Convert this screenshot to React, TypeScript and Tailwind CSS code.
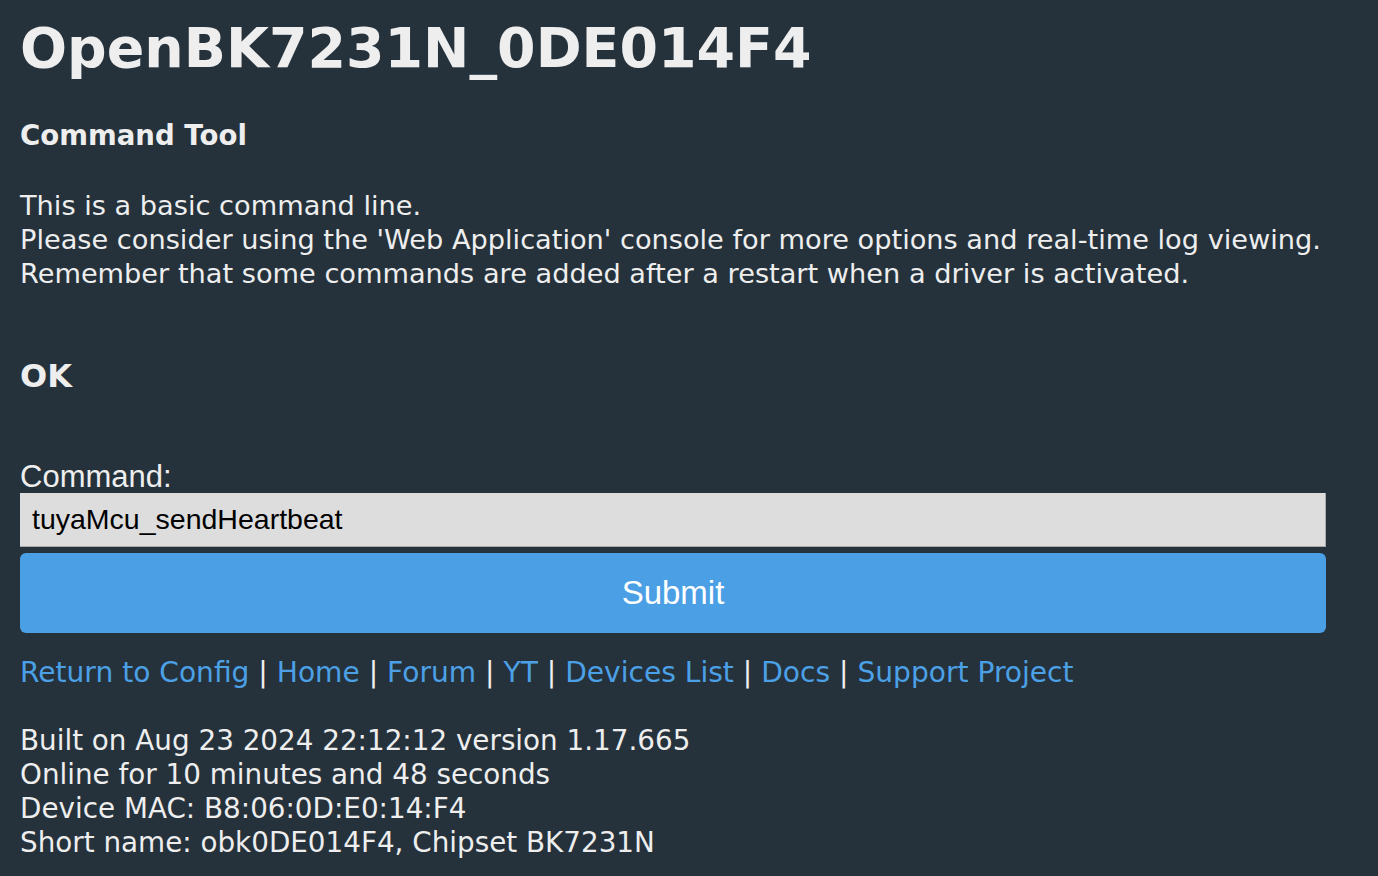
import React from "react";

const body = { fontFamily: '"DejaVu Sans", Verdana, sans-serif' };
const sans = { fontFamily: '"Liberation Sans", Arial, Helvetica, sans-serif' };

export default function App() {
  const links = ["Return to Config", "Home", "Forum", "YT", "Devices List", "Docs", "Support Project"];
  return (
    <div className="min-h-[876px] w-full bg-[#25323c] text-[#eeeeee] px-[20px]" style={body}>
      <div className="w-[1306px]">
        <h1 className="pt-[14px] text-[55.4px] leading-[68px] font-bold">OpenBK7231N_0DE014F4</h1>
        <h3 className="mt-[37px] text-[27.6px] leading-[34px] font-bold">Command Tool</h3>
        <p className="mt-[36px] text-[27.2px] leading-[34px]">
          This is a basic command line.
          <br />
          Please consider using the 'Web Application' console for more options and real-time log viewing.
          <br />
          Remember that some commands are added after a restart when a driver is activated.
        </p>
        <h2 className="mt-[53px] text-[32px] leading-[64px] font-bold">OK</h2>
        <form className="mt-[53px]" onSubmit={(e) => e.preventDefault()}>
          <label className="block text-[31px] leading-[32px]" style={sans}>Command:</label>
          <input
            className="block w-full h-[54px] bg-[#dddddd] text-black text-[28.5px] px-[12px] border-r border-b border-[#a9a9a9] outline-none"
            style={sans}
            defaultValue="tuyaMcu_sendHeartbeat"
          />
          <button
            type="submit"
            className="mt-[6px] block w-full h-[80px] rounded-[6px] bg-[#4b9fe5] text-white text-[33px]"
            style={sans}
          >
            Submit
          </button>
        </form>
        <div className="mt-[23px] text-[28.1px] leading-[34px]">
          {links.map((l, i) => (
            <React.Fragment key={l}>
              {i > 0 && <span className="text-[#eeeeee]"> | </span>}
              <a className="text-[#4ca0e6]" href="#">{l}</a>
            </React.Fragment>
          ))}
        </div>
        <div className="mt-[34px] text-[27.8px] leading-[34px]">
          Built on Aug 23 2024 22:12:12 version 1.17.665
          <br />
          Online for 10 minutes and 48 seconds
          <br />
          Device MAC: B8:06:0D:E0:14:F4
          <br />
          Short name: obk0DE014F4, Chipset BK7231N
        </div>
      </div>
    </div>
  );
}
